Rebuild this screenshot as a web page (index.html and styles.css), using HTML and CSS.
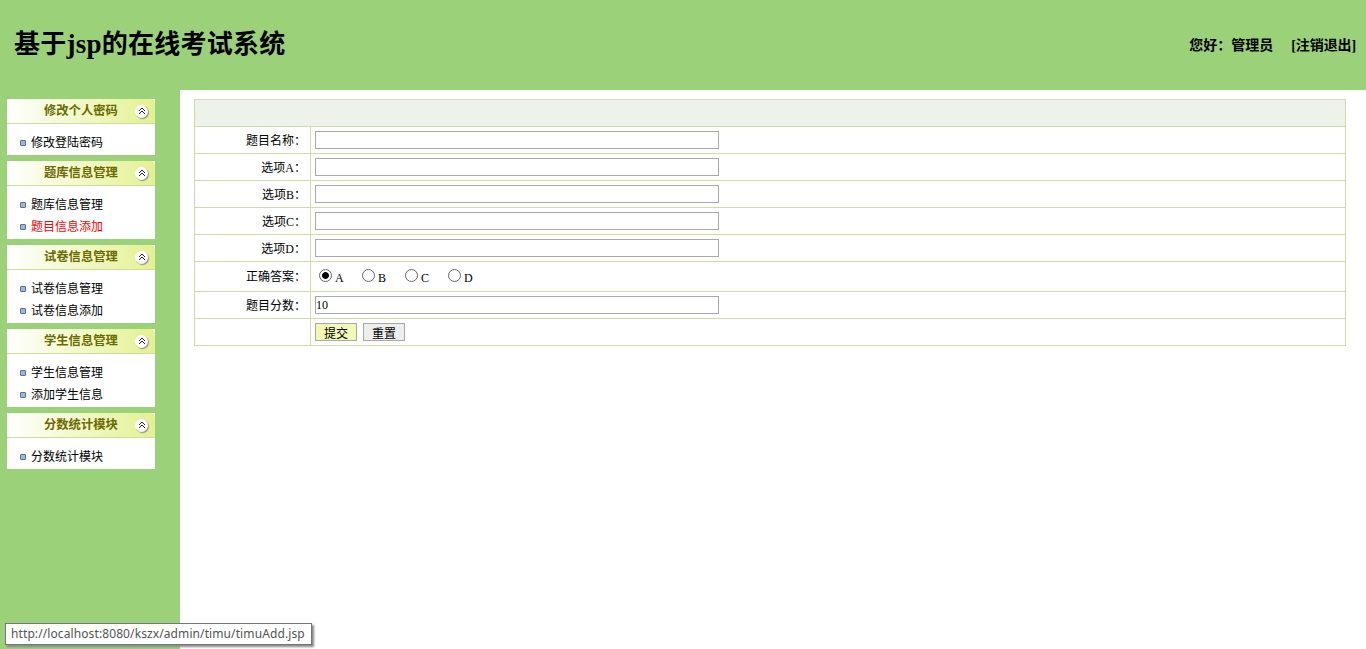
FILE: index.html
```html
<!DOCTYPE html>
<html lang="zh-CN">
<head>
<meta charset="utf-8">
<title>基于jsp的在线考试系统</title>
<link rel="stylesheet" href="styles.css">
</head>
<body>
<header class="top">
  <h1 class="site-title">基于<span class="latin">jsp</span>的在线考试系统</h1>
  <div class="user-info"><span class="hello">您好：管理员</span><a class="logout" href="#">[注销退出]</a></div>
</header>
<div class="main">
  <aside class="side">
    <section class="panel">
      <div class="panel-head"><span class="panel-title">修改个人密码</span><span class="fold"><svg viewBox="0 0 8 8" width="8" height="8"><path d="M1 4 4 1 7 4M1 7 4 4 7 7" fill="none" stroke="#222" stroke-width="1"/></svg></span></div>
      <ul class="panel-list"><li class="item"><i class="dot"></i><span>修改登陆密码</span></li></ul>
    </section>
    <section class="panel">
      <div class="panel-head"><span class="panel-title">题库信息管理</span><span class="fold"><svg viewBox="0 0 8 8" width="8" height="8"><path d="M1 4 4 1 7 4M1 7 4 4 7 7" fill="none" stroke="#222" stroke-width="1"/></svg></span></div>
      <ul class="panel-list"><li class="item"><i class="dot"></i><span>题库信息管理</span></li><li class="item active"><i class="dot"></i><span>题目信息添加</span></li></ul>
    </section>
    <section class="panel">
      <div class="panel-head"><span class="panel-title">试卷信息管理</span><span class="fold"><svg viewBox="0 0 8 8" width="8" height="8"><path d="M1 4 4 1 7 4M1 7 4 4 7 7" fill="none" stroke="#222" stroke-width="1"/></svg></span></div>
      <ul class="panel-list"><li class="item"><i class="dot"></i><span>试卷信息管理</span></li><li class="item"><i class="dot"></i><span>试卷信息添加</span></li></ul>
    </section>
    <section class="panel">
      <div class="panel-head"><span class="panel-title">学生信息管理</span><span class="fold"><svg viewBox="0 0 8 8" width="8" height="8"><path d="M1 4 4 1 7 4M1 7 4 4 7 7" fill="none" stroke="#222" stroke-width="1"/></svg></span></div>
      <ul class="panel-list"><li class="item"><i class="dot"></i><span>学生信息管理</span></li><li class="item"><i class="dot"></i><span>添加学生信息</span></li></ul>
    </section>
    <section class="panel">
      <div class="panel-head"><span class="panel-title">分数统计模块</span><span class="fold"><svg viewBox="0 0 8 8" width="8" height="8"><path d="M1 4 4 1 7 4M1 7 4 4 7 7" fill="none" stroke="#222" stroke-width="1"/></svg></span></div>
      <ul class="panel-list"><li class="item"><i class="dot"></i><span>分数统计模块</span></li></ul>
    </section>
  </aside>
  <main class="content">
    <form class="form-box">
      <div class="form-head"></div>
      <div class="row"><label class="cell-label">题目名称：</label><div class="cell-field"><input class="text-input" type="text"></div></div>
      <div class="row"><label class="cell-label">选项A：</label><div class="cell-field"><input class="text-input" type="text"></div></div>
      <div class="row"><label class="cell-label">选项B：</label><div class="cell-field"><input class="text-input" type="text"></div></div>
      <div class="row"><label class="cell-label">选项C：</label><div class="cell-field"><input class="text-input" type="text"></div></div>
      <div class="row"><label class="cell-label">选项D：</label><div class="cell-field"><input class="text-input" type="text"></div></div>
      <div class="row row-radio"><label class="cell-label">正确答案：</label><div class="cell-field radios">
        <label class="radio"><input type="radio" name="answer" checked>A</label>
        <label class="radio"><input type="radio" name="answer">B</label>
        <label class="radio"><input type="radio" name="answer">C</label>
        <label class="radio"><input type="radio" name="answer">D</label>
      </div></div>
      <div class="row"><label class="cell-label">题目分数：</label><div class="cell-field"><input class="text-input" type="text" value="10"></div></div>
      <div class="row"><div class="cell-label"></div><div class="cell-field buttons"><button class="btn btn-submit" type="button">提交</button><button class="btn btn-reset" type="reset">重置</button></div></div>
    </form>
  </main>
</div>
<div class="status-tip">http://localhost:8080/kszx/admin/timu/timuAdd.jsp</div>
</body>
</html>
```
FILE: styles.css
```css
* { box-sizing: border-box; }
html, body { height: 100%; }
body {
  margin: 0;
  height: 649px;
  overflow: hidden;
  display: flex;
  flex-direction: column;
  background: #fff;
  color: #000;
  font: 12px/1 "Liberation Serif", "Noto Sans CJK SC", serif;
}
.top {
  height: 90px;
  flex: none;
  background: #9bd178;
  display: flex;
  justify-content: space-between;
  align-items: center;
  padding: 0 10px 0 14px;
}
.site-title { margin: 0 0 2px; font-size: 26px; font-weight: 700; line-height: 32px; letter-spacing: 0.25px; }
.latin { font-size: 27px; }
.user-info { font-size: 14px; font-weight: 700; display: flex; gap: 18px; padding-top: 1px; }
.logout { color: #000; text-decoration: none; letter-spacing: -0.1px; }
.main { flex: 1; display: flex; min-height: 0; }
.side {
  width: 180px;
  flex: none;
  background: #9bd178;
  padding: 9px 25px 0 7px;
  display: flex;
  flex-direction: column;
  gap: 6px;
}
.panel { background: #fff; }
.panel-head {
  height: 25px;
  display: flex;
  align-items: center;
  justify-content: space-between;
  padding: 0 7px 0 37px;
  border-bottom: 1px solid #cfdc9b;
  border-radius: 5px 5px 0 0;
  background: linear-gradient(90deg, #fff 0%, #e3f191 100%);
}
.panel-title { font-size: 12.3px; font-weight: 700; color: #6a6a00; }
.fold {
  width: 13px;
  height: 13px;
  border-radius: 50%;
  background: #fff;
  box-shadow: 1px 1px 1px #8f8f8f;
  display: flex;
  align-items: center;
  justify-content: center;
}
.panel-list { list-style: none; margin: 0; padding: 8px 0 1px; }
.item { height: 22px; display: flex; align-items: center; padding-left: 13px; font-size: 12px; }
.item.active { color: #f00; }
.dot {
  width: 6px;
  height: 6px;
  margin-right: 5px;
  border: 1px solid #5f6f8a;
  border-radius: 1px;
  background: #94b9ea;
}
.content { flex: 1; padding: 9px 20px 0 14px; }
.form-box { border: 1px solid #cfdbaa; border-top-color: #d5deb6; }
.form-head { height: 26px; background: #edf3e8; }
.row { height: 27px; display: flex; border-top: 1px solid #cfdbaa; }
.row-radio { height: 30px; }
.cell-label {
  width: 116px;
  flex: none;
  border-right: 1px solid #cfdbaa;
  padding: 1px 4px 0 0;
  display: flex;
  align-items: center;
  justify-content: flex-end;
}
.cell-field { flex: 1; display: flex; align-items: center; padding-left: 4px; }
.text-input {
  width: 404px;
  height: 18px;
  margin: 0;
  padding: 0;
  border: 1px solid #a9a9a9;
  background: #fff;
  color: #000;
  font: 12px "Liberation Serif", serif;
}
.radios { gap: 0; padding-top: 2px; }
.radio { display: flex; align-items: center; width: 43px; font-size: 12px; }
.radio input {
  appearance: none;
  width: 13px;
  height: 13px;
  margin: -4px 3px 0 4px;
  border: 1px solid #666;
  border-radius: 50%;
  background: #fff;
}
.radio input:checked { background: radial-gradient(circle, #000 0, #000 3px, #fff 3.8px); }
.buttons { gap: 6px; }
.btn {
  width: 42px;
  height: 18px;
  margin: 0;
  padding: 0;
  border: 1px solid #a9a9a9;
  color: #000;
  font: 12px "Liberation Serif", "Noto Sans CJK SC", serif;
}
.btn-submit { background: #f2f9b5; }
.btn-reset { background: #eee; }
.status-tip {
  position: absolute;
  left: 5px;
  top: 623px;
  width: 307px;
  height: 22px;
  padding-left: 5px;
  border: 1px solid #767676;
  background: #fff;
  box-shadow: 2px 2px 2px #8a8a8a;
  color: #555;
  font: 12px/20px "Noto Sans", sans-serif;
  letter-spacing: 0.1px;
  white-space: nowrap;
}
```
